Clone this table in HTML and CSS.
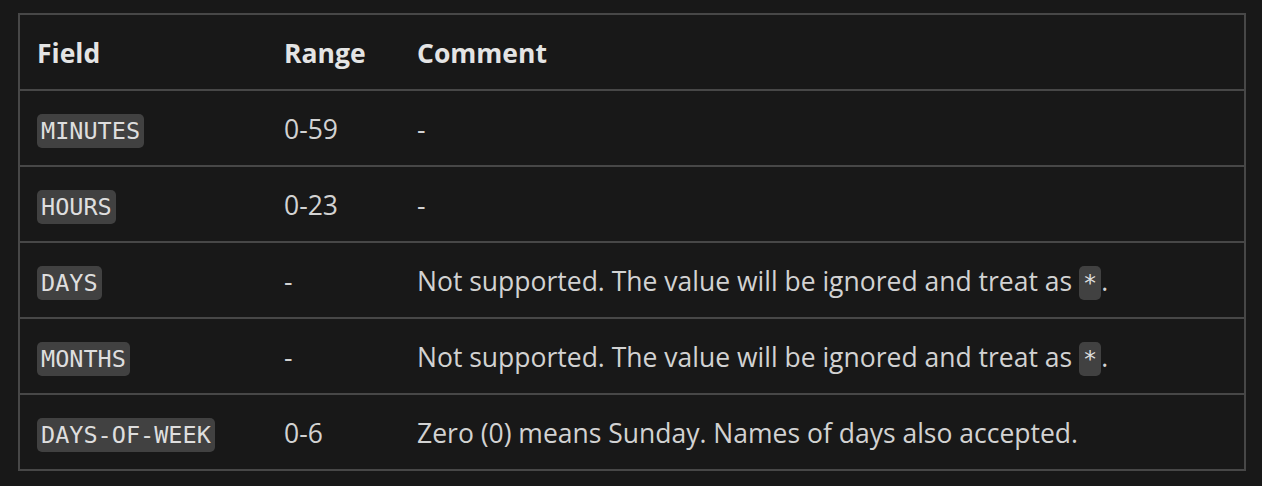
FILE: index.html
```html
<!DOCTYPE html>
<html>
<head>
<meta charset="utf-8">
<link rel="stylesheet" href="styles.css">
</head>
<body>
<table class="cron">
  <thead>
    <tr><th class="c-field">Field</th><th class="c-range">Range</th><th>Comment</th></tr>
  </thead>
  <tbody>
    <tr><td><code>MINUTES</code></td><td>0-59</td><td>-</td></tr>
    <tr><td><code>HOURS</code></td><td>0-23</td><td>-</td></tr>
    <tr><td><code>DAYS</code></td><td>-</td><td>Not supported. The value will be ignored and treat as <code>*</code>.</td></tr>
    <tr><td><code>MONTHS</code></td><td>-</td><td>Not supported. The value will be ignored and treat as <code>*</code>.</td></tr>
    <tr><td><code>DAYS-OF-WEEK</code></td><td>0-6</td><td>Zero (0) means Sunday. Names of days also accepted.</td></tr>
  </tbody>
</table>
</body>
</html>
```

FILE: styles.css
```css
html, body {
  background: #181818;
}
body {
  margin: 0;
  padding: 13px 16px 0 18px;
  font-family: "Open Sans", "Noto Sans", sans-serif;
  font-size: 26.5px;
  color: #d2d2d2;
}
.cron {
  width: 1228px;
  border-collapse: collapse;
  border: 2px solid #474747;
}
.cron th, .cron td {
  text-align: left;
  padding: 2px 17px 0;
  height: 72px;
  border-top: 2px solid #474747;
  vertical-align: middle;
  white-space: nowrap;
}
.cron th {
  font-weight: 700;
  color: #e4e4e4;
}
.c-field { width: 213px; }
.c-range { width: 99px; }
code {
  font-family: "DejaVu Sans Mono", monospace;
  font-size: 23.5px;
  background: #414141;
  color: #dedede;
  padding: 3px 4px;
  border-radius: 5px;
}
```
